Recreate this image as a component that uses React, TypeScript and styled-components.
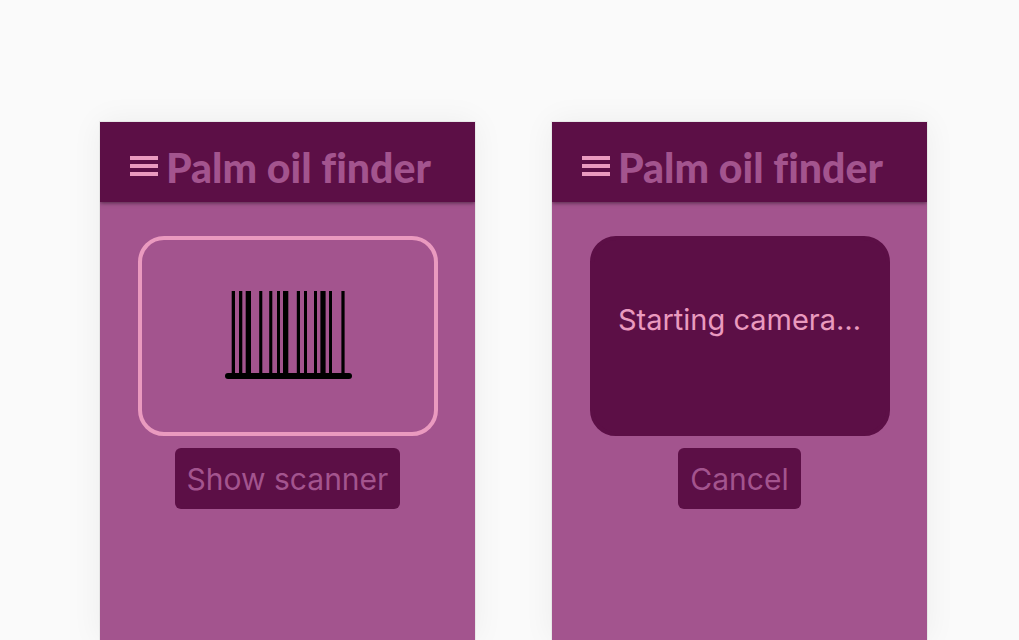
import React from "react";
import styled, { createGlobalStyle } from "styled-components";

const color = {
  page: "#fafafa",
  dark: "#5c0f46",
  mid: "#a3548e",
  pink: "#ea9abf",
};

const GlobalStyle = createGlobalStyle`
  *, *::before, *::after { box-sizing: border-box; }
  body {
    margin: 0;
    background: ${color.page};
    font-family: Inter, "Liberation Sans", sans-serif;
  }
`;

const Page = styled.main`
  display: grid;
  grid-template-columns: 1fr 1fr;
  gap: 77px;
  min-height: 100vh;
  padding: 122px 92px 0 100px;
`;

const Screen = styled.section`
  background: ${color.mid};
  box-shadow: 0 0 0 1px rgba(0, 0, 0, 0.05), 0 0 30px rgba(0, 0, 0, 0.06);
`;

const Header = styled.header`
  display: flex;
  align-items: center;
  gap: 8px;
  height: 80px;
  padding: 8px 30px 0;
  background: ${color.dark};
  box-shadow: 0 1px 4px rgba(0, 0, 0, 0.5);
  clip-path: inset(0 0 -8px 0);
`;

const MenuButton = styled.button`
  display: flex;
  flex-direction: column;
  gap: 4px;
  width: 28px;
  padding: 0;
  border: 0;
  background: none;
  cursor: pointer;
`;

const MenuBar = styled.span`
  height: 4px;
  background: ${color.pink};
`;

const Title = styled.h1`
  margin: 0;
  padding-top: 4px;
  color: ${color.mid};
  font: 900 41px/48px Lato, sans-serif;
  font-variant-ligatures: none;
  white-space: nowrap;
`;

const Body = styled.div`
  display: flex;
  flex-direction: column;
  align-items: center;
  gap: 12px;
  padding: 34px 36px;
`;

const Viewfinder = styled.div<{ $active?: boolean }>`
  display: flex;
  align-items: center;
  justify-content: center;
  width: 300px;
  height: 200px;
  border: 4px solid ${(p) => (p.$active ? color.dark : color.pink)};
  border-radius: 26px;
  background: ${(p) => (p.$active ? color.dark : "transparent")};
`;

const Status = styled.p`
  margin: 0;
  padding-bottom: 32px;
  color: ${color.pink};
  font-size: 29px;
  line-height: 36px;
  white-space: nowrap;
`;

const ActionButton = styled.button`
  height: 61px;
  padding: 0 12px;
  border: 0;
  border-radius: 6px;
  background: ${color.dark};
  color: ${color.mid};
  font-family: inherit;
  font-size: 30px;
  cursor: pointer;
`;

/* Each bar is [left edge, width]. */
const bars = [
  [6.7, 3.3], [14, 3.3], [20.7, 5.3], [34.2, 3.1], [44.2, 3.1], [52, 3],
  [58, 5.3], [71.8, 3.2], [79, 3], [89, 3], [95.4, 5.2], [104, 3], [116.4, 3.2],
];

const Barcode = () => (
  <svg width="126" height="90" viewBox="0 0 126 90" overflow="visible" role="img" aria-label="Barcode">
    {bars.map(([x, w]) => (
      <rect key={x} x={x} y="0" width={w} height="83" />
    ))}
    <rect x="0" y="82" width="127" height="6" rx="3" />
  </svg>
);

const AppHeader = () => (
  <Header>
    <MenuButton aria-label="Menu">
      <MenuBar />
      <MenuBar />
      <MenuBar />
    </MenuButton>
    <Title>Palm oil finder</Title>
  </Header>
);

export default function App() {
  return (
    <>
      <GlobalStyle />
      <Page>
        <Screen>
          <AppHeader />
          <Body>
            <Viewfinder>
              <Barcode />
            </Viewfinder>
            <ActionButton>Show scanner</ActionButton>
          </Body>
        </Screen>
        <Screen>
          <AppHeader />
          <Body>
            <Viewfinder $active>
              <Status>Starting camera…</Status>
            </Viewfinder>
            <ActionButton>Cancel</ActionButton>
          </Body>
        </Screen>
      </Page>
    </>
  );
}
